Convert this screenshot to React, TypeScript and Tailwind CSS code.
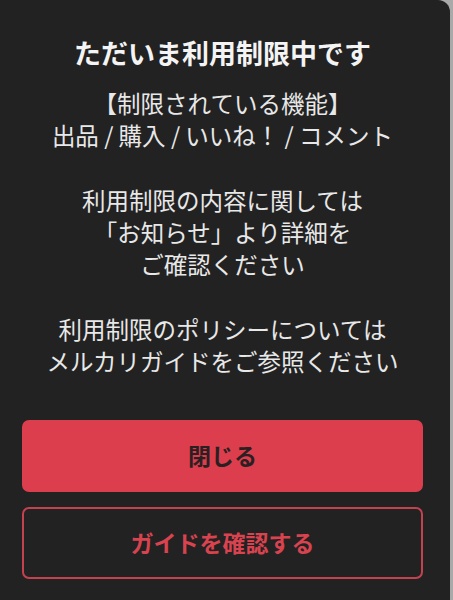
export default function App() {
  return (
    <div className="flex h-[600px] w-[453px] bg-[#a9a9a9] font-['Noto_Sans_CJK_JP',sans-serif]">
      <div className="flex h-full w-[450px] flex-col rounded-tr-[12px] bg-[#222222] pl-[22px] pr-[27px] pt-[35px]">
        <h1 className="text-center text-[27px] font-bold leading-[36px] text-[#f4f4f4]">
          ただいま利用制限中です
        </h1>

        <div className="mt-[16px] text-center text-[23.5px] leading-[32.3px] text-[#e8e8e8]">
          <p>【制限されている機能】</p>
          <p>出品 / 購入 / いいね！ / コメント</p>
          <p className="mt-[32.3px]">利用制限の内容に関しては</p>
          <p>「お知らせ」より詳細を</p>
          <p>ご確認ください</p>
          <p className="mt-[32.3px]">利用制限のポリシーについては</p>
          <p>メルカリガイドをご参照ください</p>
        </div>

        <div className="mt-[42px] flex flex-col gap-[15px]">
          <button className="flex h-[72px] w-full items-center justify-center rounded-[7px] bg-[#dc3e4e] text-[23px] font-bold text-[#2a2022]">
            閉じる
          </button>
          <button className="flex h-[72px] w-full items-center justify-center rounded-[7px] border-2 border-[#c4424f] text-[23px] font-bold text-[#d8434f]">
            ガイドを確認する
          </button>
        </div>
      </div>
    </div>
  )
}
